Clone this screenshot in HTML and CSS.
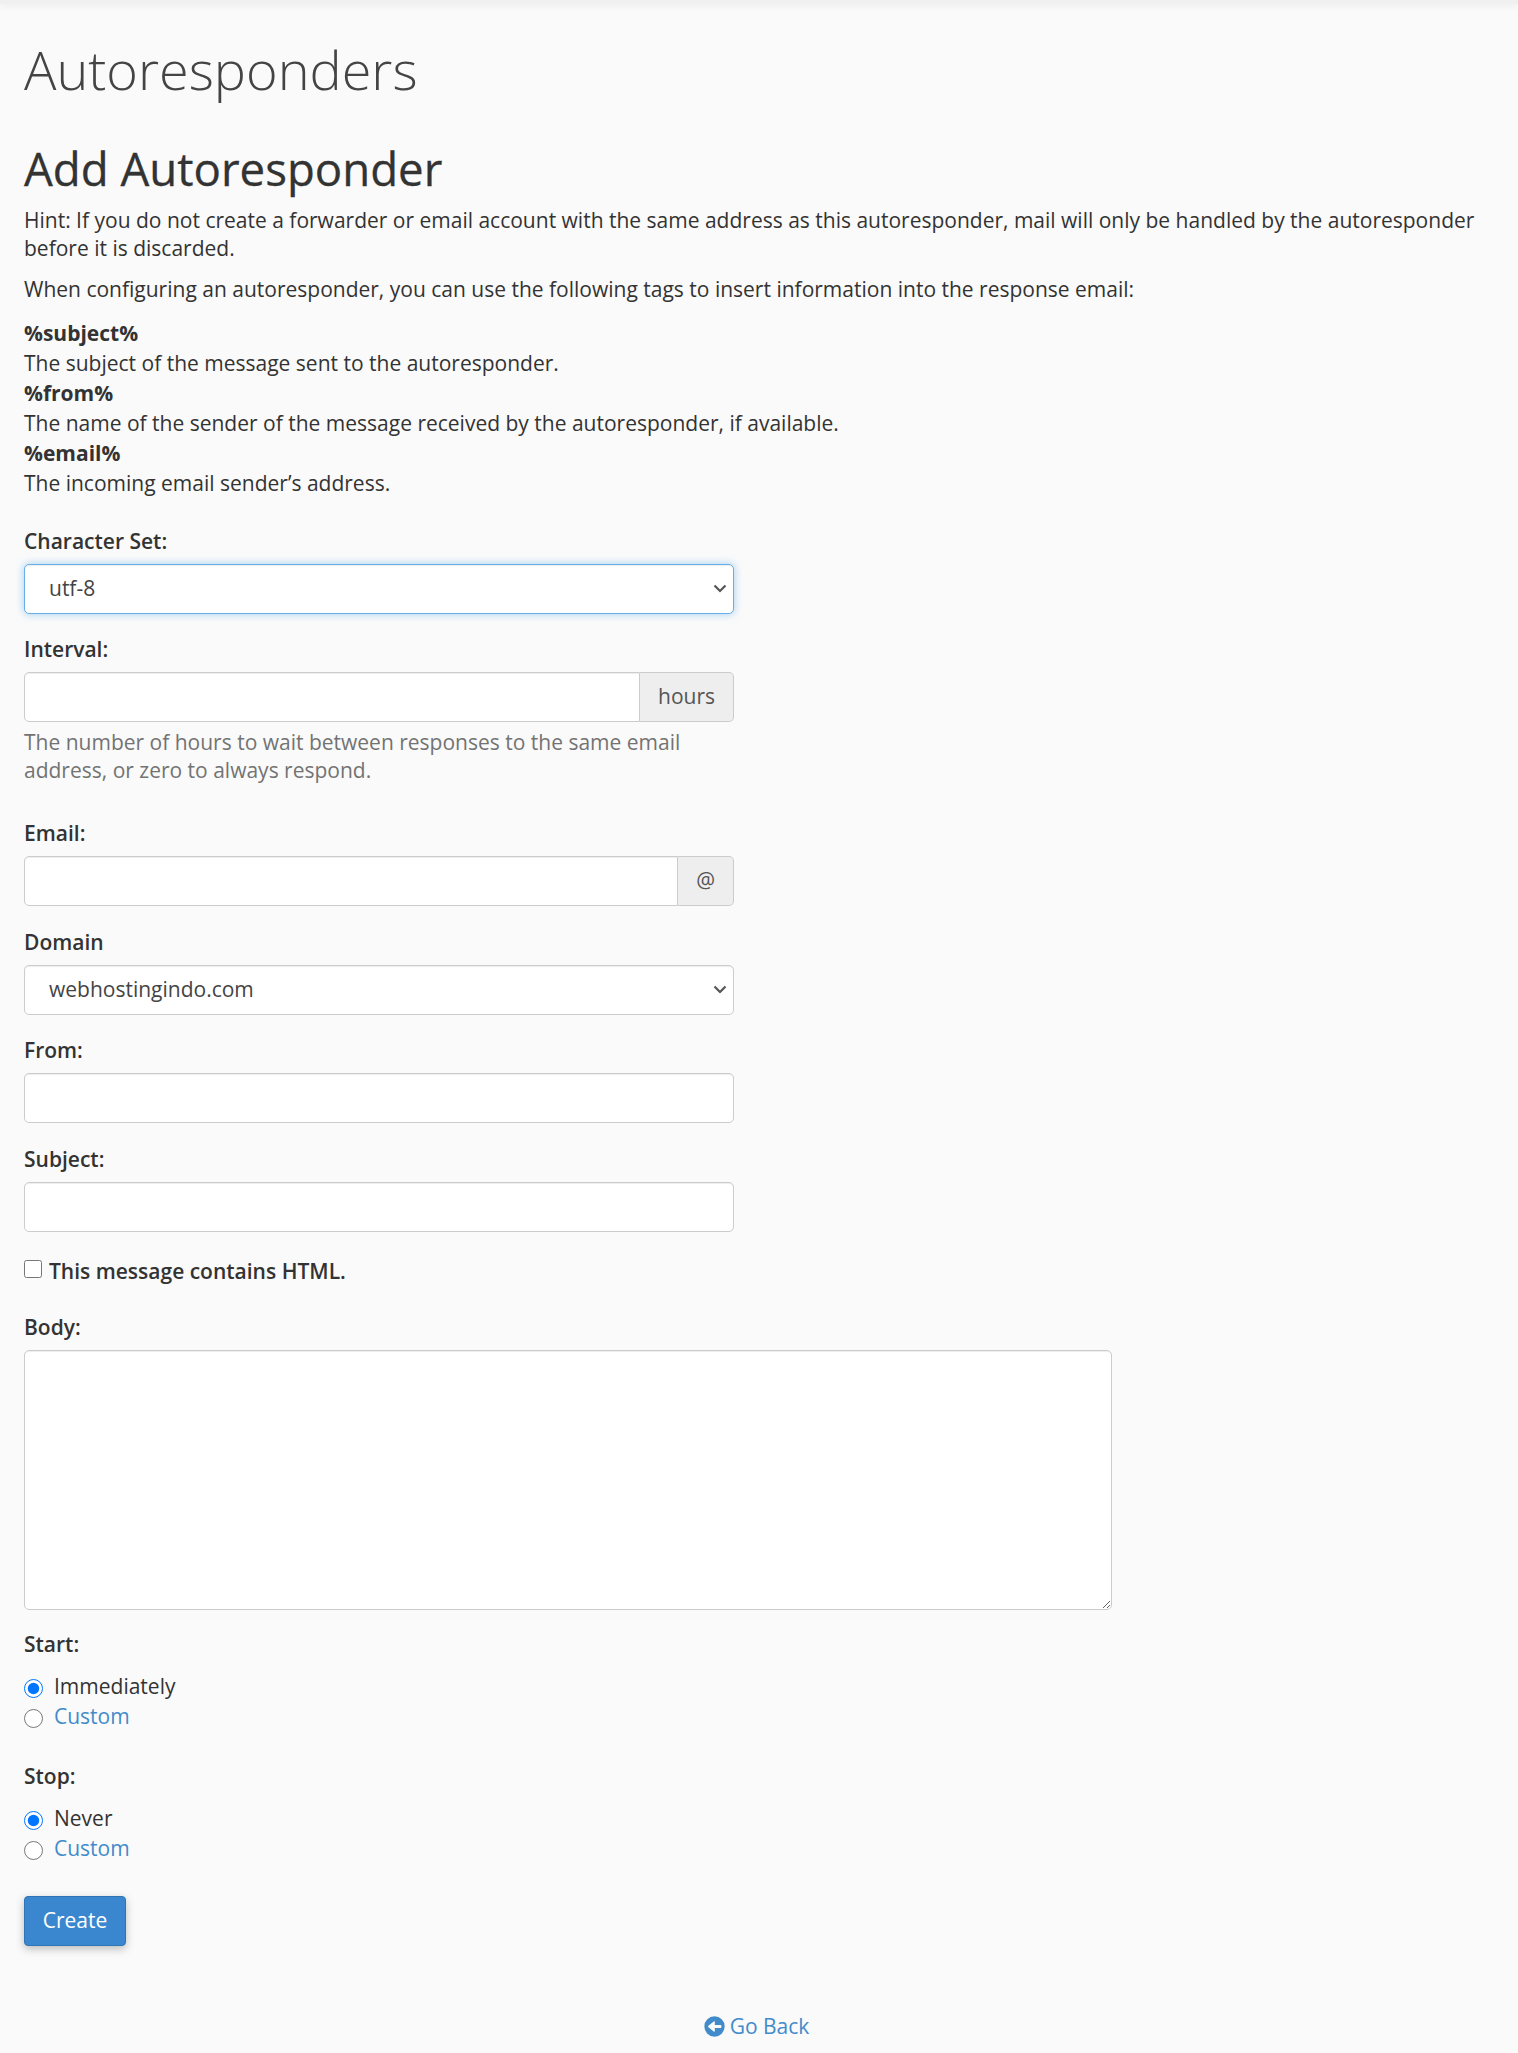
FILE: index.html
```html
<!DOCTYPE html>
<html lang="en">
  <head>
    <meta charset="UTF-8" />
    <meta name="viewport" content="width=device-width, initial-scale=1.0" />
    <title>Autoresponders</title>
    <link rel="stylesheet" href="styles.css">
  </head>
  <body>
    <div class="top-bar"></div>
    <main class="content">
      <h1 class="page-title">Autoresponders</h1>
      <h2 class="section-title">Add Autoresponder</h2>
      <p class="hint">Hint: If you do not create a forwarder or email account with the same address as this autoresponder, mail will only be handled by the autoresponder before it is discarded.</p>
      <p class="hint">When configuring an autoresponder, you can use the following tags to insert information into the response email:</p>
      <dl class="tag-list">
        <dt>%subject%</dt>
        <dd>The subject of the message sent to the autoresponder.</dd>
        <dt>%from%</dt>
        <dd>The name of the sender of the message received by the autoresponder, if available.</dd>
        <dt>%email%</dt>
        <dd>The incoming email sender’s address.</dd>
      </dl>

      <form class="responder-form">
        <div class="form-group">
          <label for="charset">Character Set:</label>
          <select id="charset" class="form-control select-control is-focused">
            <option>utf-8</option>
          </select>
        </div>

        <div class="form-group">
          <label for="interval">Interval:</label>
          <div class="input-group">
            <input type="text" id="interval" class="form-control" />
            <span class="input-addon">hours</span>
          </div>
          <div class="help-text">The number of hours to wait between responses to the same email address, or zero to always respond.</div>
        </div>

        <div class="form-group">
          <label for="email">Email:</label>
          <div class="input-group">
            <input type="text" id="email" class="form-control" />
            <span class="input-addon">@</span>
          </div>
        </div>

        <div class="form-group">
          <label for="domain">Domain</label>
          <select id="domain" class="form-control select-control">
            <option>webhostingindo.com</option>
          </select>
        </div>

        <div class="form-group">
          <label for="from">From:</label>
          <input type="text" id="from" class="form-control" />
        </div>

        <div class="form-group subject-group">
          <label for="subject">Subject:</label>
          <input type="text" id="subject" class="form-control" />
        </div>

        <div class="check-row">
          <input type="checkbox" id="is-html" class="check-box" />
          <label for="is-html">This message contains HTML.</label>
        </div>

        <div class="form-group body-group">
          <label for="body">Body:</label>
          <textarea id="body" class="form-control body-input"></textarea>
        </div>

        <div class="radio-group">
          <div class="radio-title">Start:</div>
          <div class="radio-row">
            <input type="radio" name="start" id="start-now" checked />
            <label for="start-now">Immediately</label>
          </div>
          <div class="radio-row">
            <input type="radio" name="start" id="start-custom" />
            <a href="#" class="link">Custom</a>
          </div>
        </div>

        <div class="radio-group">
          <div class="radio-title">Stop:</div>
          <div class="radio-row">
            <input type="radio" name="stop" id="stop-never" checked />
            <label for="stop-never">Never</label>
          </div>
          <div class="radio-row">
            <input type="radio" name="stop" id="stop-custom" />
            <a href="#" class="link">Custom</a>
          </div>
        </div>

        <button type="button" class="create-button">Create</button>
      </form>

      <div class="back-row">
        <a href="#" class="link back-link">
          <svg class="back-icon" viewBox="0 0 512 512" aria-hidden="true">
            <path d="M256 8a248 248 0 1 0 0 496 248 248 0 0 0 0-496zm144 282H264v82c0 11-13 16-20 9L108 273c-9-9-9-25 0-34l136-108c7-7 20-2 20 9v82h136c13 0 24 11 24 24v20c0 13-11 24-24 24z" />
          </svg>
          Go Back
        </a>
      </div>
    </main>
  </body>
</html>
```

FILE: styles.css
```css
body {
  margin: 0;
  background: #fafafa;
  color: #333;
  font-family: "Open Sans", sans-serif;
  font-size: 21px;
  line-height: 27.5px;
}

.top-bar {
  height: 4px;
  background: #f0f0f0;
  box-shadow: 0 2px 6px rgba(0, 0, 0, 0.07);
}

.content {
  padding: 0 24px;
}

.page-title {
  margin: 0;
  padding-top: 35px;
  font-size: 54px;
  font-weight: 300;
  line-height: 60px;
  color: #444;
}

.section-title {
  margin: 0;
  padding-top: 39px;
  font-size: 45.6px;
  font-weight: 500;
  line-height: 60px;
  color: #333;
  -webkit-text-stroke: 0.3px #333;
}

.hint {
  margin: 0 0 14px;
}

.section-title + .hint {
  margin-top: 9px;
}

.tag-list {
  margin: 0 0 28px;
  line-height: 30px;
}

.tag-list dt {
  font-weight: 700;
}

.tag-list dd {
  margin: 0;
}

.responder-form {
  width: 710px;
}

.form-group {
  margin-bottom: 20.5px;
}

.form-group label,
.radio-title {
  display: block;
  margin-bottom: 8px;
  font-weight: 600;
  line-height: 30px;
}

.form-control {
  display: block;
  width: 100%;
  height: 50px;
  box-sizing: border-box;
  padding: 0 20px;
  border: 1px solid #ccc;
  border-radius: 5px;
  background: #fff;
  box-shadow: inset 0 1px 1px rgba(0, 0, 0, 0.075);
  color: #555;
  font: inherit;
}

.select-control {
  appearance: none;
  padding: 0 30px 0 24px;
  color: #444;
  background: #fff url("data:image/svg+xml,%3Csvg xmlns='http://www.w3.org/2000/svg' width='14' height='9' viewBox='0 0 14 9'%3E%3Cpath d='M1.5 1.5 7 7l5.5-5.5' fill='none' stroke='%23555' stroke-width='2.2'/%3E%3C/svg%3E") no-repeat right 6px center;
}

.is-focused {
  border-color: #66afe9;
  box-shadow: inset 0 1px 1px rgba(0, 0, 0, 0.075), 0 0 8px rgba(102, 175, 233, 0.6);
}

.input-group {
  display: flex;
}

.input-group .form-control {
  flex: 1;
  border-radius: 5px 0 0 5px;
}

.input-addon {
  display: flex;
  align-items: center;
  padding: 0 18px;
  border: 1px solid #ccc;
  border-left: 0;
  border-radius: 0 5px 5px 0;
  background: #eee;
  color: #555;
}

.help-text {
  margin-top: 7px;
  margin-bottom: 34px;
  color: #737373;
}

.subject-group {
  margin-bottom: 26px;
}

.check-row {
  display: flex;
  align-items: flex-start;
  margin-bottom: 27px;
}

.check-box {
  width: 18px;
  height: 18px;
  margin: 2px 7px 0 0;
}

.check-row label {
  font-weight: 600;
}

.body-group {
  width: 1088px;
  margin-bottom: 19px;
}

.body-input {
  height: 260px;
  padding: 8px 12px;
  resize: both;
}

.radio-group {
  margin-bottom: 29px;
}

.radio-title {
  margin-bottom: 13px;
}

.radio-row {
  display: flex;
  align-items: center;
  height: 30px;
}

.radio-row input {
  width: 19px;
  height: 19px;
  margin: 3px 11px 0 0;
}

.link {
  color: #428bca;
  text-decoration: none;
}

.create-button {
  display: block;
  height: 50px;
  width: 102px;
  margin-top: 32px;
  padding: 0;
  border: 1px solid #2f75b5;
  border-radius: 4px;
  background: #3a87cf;
  box-shadow: 0 3px 8px rgba(0, 0, 0, 0.25);
  color: #fff;
  font: inherit;
}

.back-row {
  margin-top: 67px;
  padding-right: 5px;
  padding-bottom: 12px;
  text-align: center;
}

.back-link {
  display: inline-flex;
  align-items: center;
  gap: 5px;
}

.back-icon {
  width: 21px;
  height: 21px;
  fill: currentColor;
}
```
